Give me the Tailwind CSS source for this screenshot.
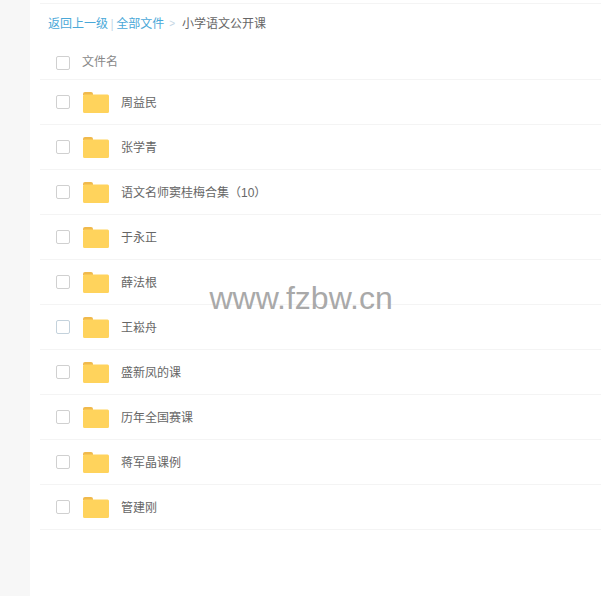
<!DOCTYPE html>
<html lang="zh">
<head>
<meta charset="utf-8">
<script src="https://cdn.jsdelivr.net/npm/@tailwindcss/browser@4"></script>
</head>
<body class="bg-white">
<div class="relative flex w-[601px] h-[596px] overflow-hidden font-['Liberation_Sans','Noto_Sans_CJK_SC',sans-serif] text-[12px]">
  <div class="w-[30px] shrink-0 bg-[#f7f7f7]"></div>
  <main class="flex-1 min-w-0">
    <div class="h-[4px] ml-[10px] border-b border-[#f4f4f4]"></div>
    <nav class="h-[36px] pl-[18px] pt-[3px] flex items-center text-[#666]">
      <span class="text-[#4aa8d8]">返回上一级</span>
      <span class="mx-[2.500px] text-[#c5d9e8]">|</span>
      <span class="text-[#4aa8d8]">全部文件</span>
      <span class="ml-[5px] mr-[7px] text-[#c3d5e3] text-[10px]">&gt;</span>
      <span>小学语文公开课</span>
    </nav>
    <div class="h-[40px] ml-[10px] pl-[16px] pt-[7px] flex items-center border-b border-[#f4f4f4] text-[#888]">
      <span class="w-[14px] h-[14px] rounded-[2px] border border-[#d0d0d0] bg-white"></span>
      <span class="ml-[12px] mb-[2px]">文件名</span>
    </div>
    <ul class="text-[#666]">
      <li class="h-[45px] ml-[10px] pl-[16px] flex items-center border-b border-[#f4f4f4]">
        <span class="w-[14px] h-[14px] rounded-[2px] border border-[#d0d0d0] bg-white"></span>
        <svg class="ml-[13px]" width="26" height="21" viewBox="0 0 26 21"><path d="M0 2a2 2 0 0 1 2-2h6a2 2 0 0 1 2 2v1H0z" fill="#f0b94c"/><path d="M0 4a1.500 1.500 0 0 1 1.500-1.500h23A1.500 1.500 0 0 1 26 4v15.500a1.500 1.500 0 0 1-1.500 1.500h-23A1.500 1.500 0 0 1 0 19.500z" fill="#ffd35c"/></svg>
        <span class="ml-[12px] mt-[2px]">周益民</span>
      </li>
      <li class="h-[45px] ml-[10px] pl-[16px] flex items-center border-b border-[#f4f4f4]">
        <span class="w-[14px] h-[14px] rounded-[2px] border border-[#d0d0d0] bg-white"></span>
        <svg class="ml-[13px]" width="26" height="21" viewBox="0 0 26 21"><path d="M0 2a2 2 0 0 1 2-2h6a2 2 0 0 1 2 2v1H0z" fill="#f0b94c"/><path d="M0 4a1.500 1.500 0 0 1 1.500-1.500h23A1.500 1.500 0 0 1 26 4v15.500a1.500 1.500 0 0 1-1.500 1.500h-23A1.500 1.500 0 0 1 0 19.500z" fill="#ffd35c"/></svg>
        <span class="ml-[12px] mt-[2px]">张学青</span>
      </li>
      <li class="h-[45px] ml-[10px] pl-[16px] flex items-center border-b border-[#f4f4f4]">
        <span class="w-[14px] h-[14px] rounded-[2px] border border-[#d0d0d0] bg-white"></span>
        <svg class="ml-[13px]" width="26" height="21" viewBox="0 0 26 21"><path d="M0 2a2 2 0 0 1 2-2h6a2 2 0 0 1 2 2v1H0z" fill="#f0b94c"/><path d="M0 4a1.500 1.500 0 0 1 1.500-1.500h23A1.500 1.500 0 0 1 26 4v15.500a1.500 1.500 0 0 1-1.500 1.500h-23A1.500 1.500 0 0 1 0 19.500z" fill="#ffd35c"/></svg>
        <span class="ml-[12px] mt-[2px]">语文名师窦桂梅合集（10）</span>
      </li>
      <li class="h-[45px] ml-[10px] pl-[16px] flex items-center border-b border-[#f4f4f4]">
        <span class="w-[14px] h-[14px] rounded-[2px] border border-[#d0d0d0] bg-white"></span>
        <svg class="ml-[13px]" width="26" height="21" viewBox="0 0 26 21"><path d="M0 2a2 2 0 0 1 2-2h6a2 2 0 0 1 2 2v1H0z" fill="#f0b94c"/><path d="M0 4a1.500 1.500 0 0 1 1.500-1.500h23A1.500 1.500 0 0 1 26 4v15.500a1.500 1.500 0 0 1-1.500 1.500h-23A1.500 1.500 0 0 1 0 19.500z" fill="#ffd35c"/></svg>
        <span class="ml-[12px] mt-[2px]">于永正</span>
      </li>
      <li class="h-[45px] ml-[10px] pl-[16px] flex items-center border-b border-[#f4f4f4]">
        <span class="w-[14px] h-[14px] rounded-[2px] border border-[#d0d0d0] bg-white"></span>
        <svg class="ml-[13px]" width="26" height="21" viewBox="0 0 26 21"><path d="M0 2a2 2 0 0 1 2-2h6a2 2 0 0 1 2 2v1H0z" fill="#f0b94c"/><path d="M0 4a1.500 1.500 0 0 1 1.500-1.500h23A1.500 1.500 0 0 1 26 4v15.500a1.500 1.500 0 0 1-1.500 1.500h-23A1.500 1.500 0 0 1 0 19.500z" fill="#ffd35c"/></svg>
        <span class="ml-[12px] mt-[2px]">薛法根</span>
      </li>
      <li class="h-[45px] ml-[10px] pl-[16px] flex items-center border-b border-[#f4f4f4]">
        <span class="w-[14px] h-[14px] rounded-[2px] border border-[#c4d2dc] bg-white"></span>
        <svg class="ml-[13px]" width="26" height="21" viewBox="0 0 26 21"><path d="M0 2a2 2 0 0 1 2-2h6a2 2 0 0 1 2 2v1H0z" fill="#f0b94c"/><path d="M0 4a1.500 1.500 0 0 1 1.500-1.500h23A1.500 1.500 0 0 1 26 4v15.500a1.500 1.500 0 0 1-1.500 1.500h-23A1.500 1.500 0 0 1 0 19.500z" fill="#ffd35c"/></svg>
        <span class="ml-[12px] mt-[2px]">王崧舟</span>
      </li>
      <li class="h-[45px] ml-[10px] pl-[16px] flex items-center border-b border-[#f4f4f4]">
        <span class="w-[14px] h-[14px] rounded-[2px] border border-[#d0d0d0] bg-white"></span>
        <svg class="ml-[13px]" width="26" height="21" viewBox="0 0 26 21"><path d="M0 2a2 2 0 0 1 2-2h6a2 2 0 0 1 2 2v1H0z" fill="#f0b94c"/><path d="M0 4a1.500 1.500 0 0 1 1.500-1.500h23A1.500 1.500 0 0 1 26 4v15.500a1.500 1.500 0 0 1-1.500 1.500h-23A1.500 1.500 0 0 1 0 19.500z" fill="#ffd35c"/></svg>
        <span class="ml-[12px] mt-[2px]">盛新凤的课</span>
      </li>
      <li class="h-[45px] ml-[10px] pl-[16px] flex items-center border-b border-[#f4f4f4]">
        <span class="w-[14px] h-[14px] rounded-[2px] border border-[#d0d0d0] bg-white"></span>
        <svg class="ml-[13px]" width="26" height="21" viewBox="0 0 26 21"><path d="M0 2a2 2 0 0 1 2-2h6a2 2 0 0 1 2 2v1H0z" fill="#f0b94c"/><path d="M0 4a1.500 1.500 0 0 1 1.500-1.500h23A1.500 1.500 0 0 1 26 4v15.500a1.500 1.500 0 0 1-1.500 1.500h-23A1.500 1.500 0 0 1 0 19.500z" fill="#ffd35c"/></svg>
        <span class="ml-[12px] mt-[2px]">历年全国赛课</span>
      </li>
      <li class="h-[45px] ml-[10px] pl-[16px] flex items-center border-b border-[#f4f4f4]">
        <span class="w-[14px] h-[14px] rounded-[2px] border border-[#d0d0d0] bg-white"></span>
        <svg class="ml-[13px]" width="26" height="21" viewBox="0 0 26 21"><path d="M0 2a2 2 0 0 1 2-2h6a2 2 0 0 1 2 2v1H0z" fill="#f0b94c"/><path d="M0 4a1.500 1.500 0 0 1 1.500-1.500h23A1.500 1.500 0 0 1 26 4v15.500a1.500 1.500 0 0 1-1.500 1.500h-23A1.500 1.500 0 0 1 0 19.500z" fill="#ffd35c"/></svg>
        <span class="ml-[12px] mt-[2px]">蒋军晶课例</span>
      </li>
      <li class="h-[45px] ml-[10px] pl-[16px] flex items-center border-b border-[#f4f4f4]">
        <span class="w-[14px] h-[14px] rounded-[2px] border border-[#d0d0d0] bg-white"></span>
        <svg class="ml-[13px]" width="26" height="21" viewBox="0 0 26 21"><path d="M0 2a2 2 0 0 1 2-2h6a2 2 0 0 1 2 2v1H0z" fill="#f0b94c"/><path d="M0 4a1.500 1.500 0 0 1 1.500-1.500h23A1.500 1.500 0 0 1 26 4v15.500a1.500 1.500 0 0 1-1.500 1.500h-23A1.500 1.500 0 0 1 0 19.500z" fill="#ffd35c"/></svg>
        <span class="ml-[12px] mt-[2px]">管建刚</span>
      </li>
    </ul>
  </main>
  <div class="absolute left-[209.500px] top-[281px] text-[32px] leading-[34px] text-[#a9a9a9]">www.fzbw.cn</div>
</div>
</body>
</html>
